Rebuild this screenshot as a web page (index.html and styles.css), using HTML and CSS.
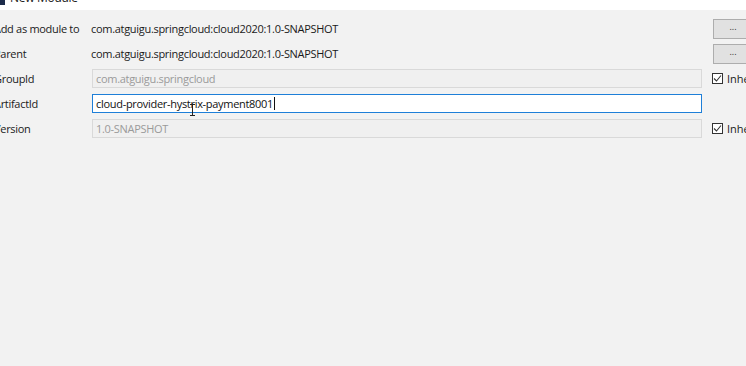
FILE: index.html
```html
<!DOCTYPE html>
<html lang="en">
<head>
  <meta charset="UTF-8" />
  <title>New Module</title>
  <link rel="stylesheet" href="styles.css">
</head>
<body>
  <div class="titlebar">
    <span class="app-icon"></span>
    <span class="title">New Module</span>
  </div>

  <div class="form">
    <div class="label">Add as module to</div>
    <div class="value">com.atguigu.springcloud:cloud2020:1.0-SNAPSHOT</div>
    <div class="side"><button class="dots">...</button></div>

    <div class="label">Parent</div>
    <div class="value">com.atguigu.springcloud:cloud2020:1.0-SNAPSHOT</div>
    <div class="side"><button class="dots">...</button></div>

    <div class="label">GroupId</div>
    <div class="field disabled">com.atguigu.springcloud</div>
    <div class="side"><span class="check"><svg viewBox="0 0 11 11" width="11" height="11"><path d="M2 5.5 L4.5 8 L9 2.5" fill="none" stroke="#333" stroke-width="1.1"/></svg></span><span class="inherit">Inherit</span></div>

    <div class="label">ArtifactId</div>
    <div class="field active">cloud-provider-hystrix-payment8001<span class="caret"></span>
      <svg class="ibeam" viewBox="0 0 7 12" width="7" height="12"><path d="M1 0.5 H6 M3.5 0.5 V11.5 M1 11.5 H6" fill="none" stroke="#222" stroke-width="1"/></svg>
    </div>
    <div class="side"></div>

    <div class="label">Version</div>
    <div class="field disabled">1.0-SNAPSHOT</div>
    <div class="side"><span class="check"><svg viewBox="0 0 11 11" width="11" height="11"><path d="M2 5.5 L4.5 8 L9 2.5" fill="none" stroke="#333" stroke-width="1.1"/></svg></span><span class="inherit">Inherit</span></div>
  </div>
</body>
</html>
```

FILE: styles.css
```css
* {
  box-sizing: border-box;
}

html, body {
  margin: 0;
  height: 100%;
  overflow: hidden;
}

body {
  font-family: "Open Sans", "Noto Sans", sans-serif;
  font-size: 11px;
  letter-spacing: -0.3px;
  color: #1a1a1a;
  background: #f2f2f2;
}

.titlebar {
  height: 10px;
  background: #ffffff;
  position: relative;
  overflow: hidden;
}

.app-icon {
  position: absolute;
  left: 0;
  top: -6px;
  width: 5px;
  height: 11px;
  background: #1c2b4a;
}

.title {
  position: absolute;
  left: 10px;
  top: -11px;
  font-size: 12px;
  color: #222;
}

.form {
  display: grid;
  grid-template-columns: 98px 610px 1fr;
  grid-auto-rows: 25px;
  margin-left: -6px;
  padding-top: 6px;
}

.label,
.value,
.side {
  display: flex;
  align-items: center;
}

.value {
  margin-left: -1px;
}

.field {
  align-self: center;
  height: 19px;
  padding: 0 3px;
  display: flex;
  align-items: center;
  border: 1px solid #d9d9d9;
  background: #f0f0f0;
  position: relative;
}

.field.disabled {
  color: #9a9a9a;
}

.field.active {
  background: #ffffff;
  border-color: #1e7fd8;
  color: #111;
}

.caret {
  display: inline-block;
  width: 1px;
  height: 13px;
  background: #111;
  margin-left: 1px;
}

.ibeam {
  position: absolute;
  left: 96px;
  top: 9px;
}

.side {
  padding-left: 10px;
}

.dots {
  width: 40px;
  height: 20px;
  margin-left: 1px;
  border: 1px solid #adadad;
  background: #e1e1e1;
  font-family: inherit;
  font-size: 9px;
  color: #333;
  padding: 0 0 4px;
}

.check {
  width: 11px;
  height: 11px;
  border: 1px solid #333;
  background: #fff;
  display: flex;
  align-items: center;
  justify-content: center;
}

.check svg {
  flex: none;
}

.inherit {
  margin-left: 4px;
  white-space: nowrap;
  letter-spacing: 0;
}
```
